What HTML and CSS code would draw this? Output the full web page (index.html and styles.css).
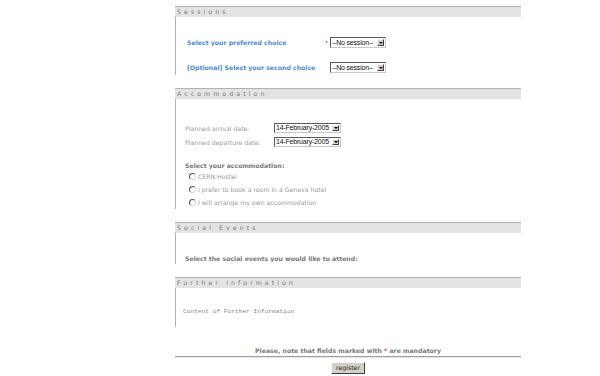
FILE: index.html
```html
<!DOCTYPE html>
<html lang="en">
<head>
  <meta charset="UTF-8">
  <title>Registration form</title>
  <link rel="stylesheet" href="styles.css">
</head>
<body>
  <div class="form">
    <div class="section">
      <div class="section-head">Sessions</div>
      <div class="section-body sessions">
        <div class="choice-row">
          <span class="choice-label">Select your preferred choice</span>
          <span class="mandatory">*</span>
          <span class="select session-select"><span class="select-value">--No session--</span><span class="select-arrow"></span></span>
        </div>
        <div class="choice-row">
          <span class="choice-label">[Optional] Select your second choice</span>
          <span class="mandatory"></span>
          <span class="select session-select"><span class="select-value">--No session--</span><span class="select-arrow"></span></span>
        </div>
      </div>
    </div>

    <div class="section">
      <div class="section-head">Accommodation</div>
      <div class="section-body accommodation">
        <div class="date-row">
          <span class="date-label">Planned arrival date:</span>
          <span class="select date-select"><span class="select-value">14-February-2005</span><span class="select-arrow"></span></span>
        </div>
        <div class="date-row">
          <span class="date-label">Planned departure date:</span>
          <span class="select date-select"><span class="select-value">14-February-2005</span><span class="select-arrow"></span></span>
        </div>
        <div class="sub-title">Select your accommodation:</div>
        <div class="radio-row"><span class="radio"></span>CERN Hostel</div>
        <div class="radio-row"><span class="radio"></span>I prefer to book a room in a Geneva hotel</div>
        <div class="radio-row"><span class="radio"></span>I will arrange my own accommodation</div>
      </div>
    </div>

    <div class="section">
      <div class="section-head">Social Events</div>
      <div class="section-body social">
        <div class="sub-title">Select the social events you would like to attend:</div>
      </div>
    </div>

    <div class="section">
      <div class="section-head">Further information</div>
      <div class="section-body further">
        <div class="further-text">Content of Further Information</div>
      </div>
    </div>

    <div class="note">Please, note that fields marked with <span class="mandatory-inline">*</span> are mandatory</div>
    <div class="actions">
      <button class="register-btn" type="button">register</button>
    </div>
  </div>
</body>
</html>
```

FILE: styles.css
```css
body {
  margin: 0;
  background: #fff;
  font-family: "DejaVu Sans", Verdana, sans-serif;
  font-size: 6.2px;
}
.form {
  width: 346px;
  margin-left: 175px;
  padding-top: 6px;
}
.section + .section {
  margin-top: 13px;
}
.section-head {
  height: 10px;
  line-height: 10px;
  border-top: 1px solid #b2b2b2;
  background: #e3e3e3;
  padding-left: 2px;
  font-size: 6.2px;
  letter-spacing: 3.1px;
  color: #777;
}
.section-body {
  border-left: 1px solid #b2b2b2;
}

/* sessions */
.sessions {
  padding: 20px 0 2px 11px;
}
.choice-row {
  display: flex;
  align-items: center;
  height: 11px;
}
.choice-row + .choice-row {
  margin-top: 14px;
}
.choice-label {
  width: 138px;
  font-weight: bold;
  color: #4b8bd0;
}
.mandatory {
  width: 5px;
  color: #e03030;
  font-size: 6px;
}
.select {
  display: flex;
  align-items: stretch;
  box-sizing: border-box;
  border: 1px solid #5a5a5a;
  border-right-color: #c8c8c8;
  border-bottom-color: #c8c8c8;
  background: #fff;
  color: #111;
  font-family: "Liberation Sans", Arial, sans-serif;
}
.session-select {
  width: 56px;
  height: 11px;
}
.date-select {
  width: 67px;
  height: 10px;
}
.select-value {
  flex: 1;
  padding-left: 1px;
  line-height: 9px;
  overflow: hidden;
  white-space: nowrap;
  font-size: 7px;
  letter-spacing: -0.2px;
}
.date-select .select-value {
  line-height: 8px;
}
.select-arrow {
  width: 7px;
  margin: 1px;
  background: #d4d0c8;
  border: 1px solid;
  border-color: #f4f4f4 #404040 #404040 #f4f4f4;
  box-sizing: border-box;
  display: flex;
  align-items: center;
  justify-content: center;
}
.select-arrow::after {
  content: "";
  border-left: 2px solid transparent;
  border-right: 2px solid transparent;
  border-top: 2px solid #000;
}

/* accommodation */
.accommodation {
  padding: 24px 0 0 9px;
  color: #9a9a9a;
}
.date-row {
  display: flex;
  align-items: center;
}
.date-row + .date-row {
  margin-top: 4px;
}
.date-label {
  width: 89px;
}
.sub-title {
  font-weight: bold;
  color: #7a7a7a;
  line-height: 9px;
}
.accommodation .sub-title {
  margin-top: 14px;
}
.radio-row {
  display: flex;
  align-items: center;
  height: 13px;
  padding-left: 4px;
}
.radio {
  width: 5px;
  height: 5px;
  margin-right: 2px;
  border-radius: 50%;
  border: 1px solid;
  border-color: #505050 #d8d8d8 #d8d8d8 #505050;
  background: #fff;
}

/* social events */
.social {
  padding: 21px 0 1px 9px;
}

/* further information */
.further {
  padding: 19px 0 10px 7px;
}
.further-text {
  font-family: "Liberation Mono", "Courier New", monospace;
  font-size: 6.2px;
  line-height: 10px;
  color: #8a8a8a;
}

.note {
  margin-top: 19px;
  text-align: center;
  font-weight: bold;
  color: #7a7a7a;
  line-height: 10px;
  border-bottom: 1px solid #a0a0a0;
}
.mandatory-inline {
  color: #e03030;
}
.actions {
  border-top: 1px solid #e4e4e4;
  padding-top: 4px;
  text-align: center;
}
.register-btn {
  width: 34px;
  height: 12px;
  padding: 0;
  background: #d4d0c8;
  border: 1px solid;
  border-color: #fff #404040 #404040 #fff;
  font-family: "DejaVu Sans", Verdana, sans-serif;
  font-size: 6.2px;
  color: #222;
  line-height: 10px;
}
```
